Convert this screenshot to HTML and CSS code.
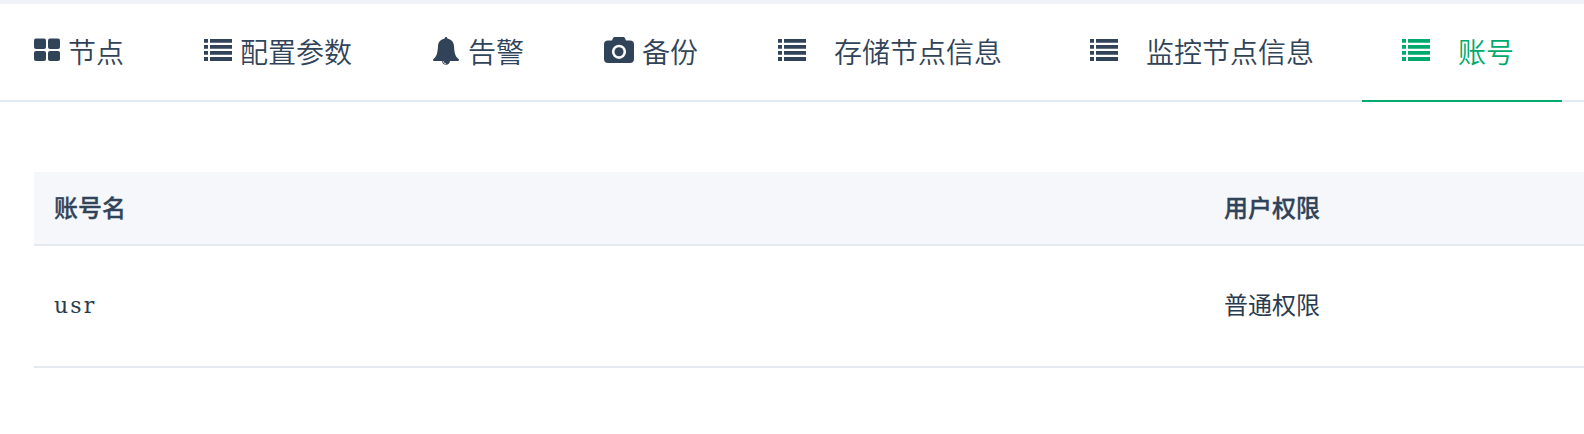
FILE: index.html
```html
<!DOCTYPE html>
<html lang="zh-CN">
<head>
<meta charset="utf-8">
<title>账号</title>
<link rel="stylesheet" href="styles.css">
</head>
<body>
<svg class="sprite" aria-hidden="true">
  <symbol id="list" viewBox="0 0 28 32">
    <path d="M0 5h4v3.700H0zM6 5h22v3.700H6zM0 11h4v3.700H0zM6 11h22v3.700H6zM0 17h4v3.700H0zM6 17h22v3.700H6zM0 23h4v4H0zM6 23h22v4H6z"/>
  </symbol>
</svg>
<nav class="tabs">
  <a class="tab first">
    <svg class="icon" viewBox="0 0 28 32"><rect x="2" y="4.500" width="12" height="10.500" rx="2"/><rect x="16" y="4.500" width="12" height="10.500" rx="2"/><rect x="2" y="17" width="12" height="10" rx="2"/><rect x="16" y="17" width="12" height="10" rx="2"/></svg>
    <span>节点</span>
  </a>
  <a class="tab"><svg class="icon"><use href="#list"/></svg><span>配置参数</span></a>
  <a class="tab">
    <svg class="icon" viewBox="0 0 28 32"><path d="M14 3c.9 0 1.300.7 1.300 1.600 4 .8 6.400 3.500 6.700 7.400.3 5 .8 9.500 3.500 12 .8.8 1.500 1.200 1.500 2.100 0 .6-.4.900-1 .9h-8c-.2 2.300-1.700 3.700-4 3.700s-3.800-1.400-4-3.700H2c-.6 0-1-.3-1-.9 0-.9.7-1.300 1.500-2.100 2.700-2.500 3.200-7 3.500-12 .3-3.900 2.700-6.600 6.700-7.400C12.700 3.700 13.100 3 14 3z"/><path class="cut" d="M11.300 27.200c.2 1.700 1.200 2.600 2.800 2.600"/></svg>
    <span>告警</span>
  </a>
  <a class="tab">
    <svg class="icon camera" viewBox="0 0 30 32"><path fill-rule="evenodd" d="M4 6.500h4l1-2.200C9.400 3.300 10 3 11 3h8c1 0 1.600.3 2 1.300l1 2.200h4c2.600 0 4 1.500 4 4V25c0 2.500-1.500 3.900-4 3.900H4c-2.500 0-4-1.400-4-3.900V10.500c0-2.500 1.500-4 4-4zM15 10.700a7.100 7.100 0 1 0 0 14.200 7.100 7.100 0 0 0 0-14.200z"/><circle cx="15" cy="17.800" r="4.500"/></svg>
    <span>备份</span>
  </a>
  <a class="tab wide"><svg class="icon"><use href="#list"/></svg><span>存储节点信息</span></a>
  <a class="tab wide"><svg class="icon"><use href="#list"/></svg><span>监控节点信息</span></a>
  <a class="tab wide active"><svg class="icon"><use href="#list"/></svg><span>账号</span></a>
</nav>
<main class="content">
  <div class="row head"><div>账号名</div><div>用户权限</div></div>
  <div class="row"><div class="name">usr</div><div>普通权限</div></div>
</main>
</body>
</html>
```
FILE: styles.css
```css
* {
  box-sizing: border-box;
}

body {
  margin: 0;
  background: #fff;
  border-top: 4px solid #f0f2f8;
  color: #314358;
  font-family: "Noto Sans CJK SC", sans-serif;
  overflow: hidden;
}

.sprite {
  display: none;
}

.tabs {
  display: flex;
  height: 98px;
  box-shadow: inset 0 -2px #e4eaf1;
}

.tab {
  display: flex;
  flex: none;
  gap: 8px;
  padding: 30px 40px 0;
  font-size: 28px;
  line-height: 34px;
  font-weight: 350;
  white-space: nowrap;
}

.first {
  padding-left: 32px;
}

.wide {
  gap: 28px;
  padding-right: 48px;
}

.active {
  color: #00aa6c;
  border-bottom: 2px solid #00aa6c;
}

.icon {
  flex: none;
  width: 28px;
  height: 32px;
  margin-top: -.4px;
  fill: currentColor;
}

.camera {
  width: 30px;
}

.cut {
  fill: none;
  stroke: #fff;
  stroke-width: .8;
}

.content {
  padding: 70px 0 0 34px;
}

.row {
  display: grid;
  grid-template-columns: 1170px 1fr;
  align-items: center;
  height: 122px;
  padding: 0 0 4px 20px;
  border-bottom: 2px solid #e4eaf0;
  font-size: 24px;
  line-height: 36px;
  color: #2b3b4e;
}

.head {
  height: 74px;
  padding-bottom: 2px;
  background: #f5f7fb;
  font-weight: 500;
  -webkit-text-stroke: .3px currentColor;
  color: #314358;
}

.name {
  padding-top: 4px;
  font-family: "DejaVu Serif", serif;
  font-size: 22px;
  letter-spacing: 2.2px;
}
```
